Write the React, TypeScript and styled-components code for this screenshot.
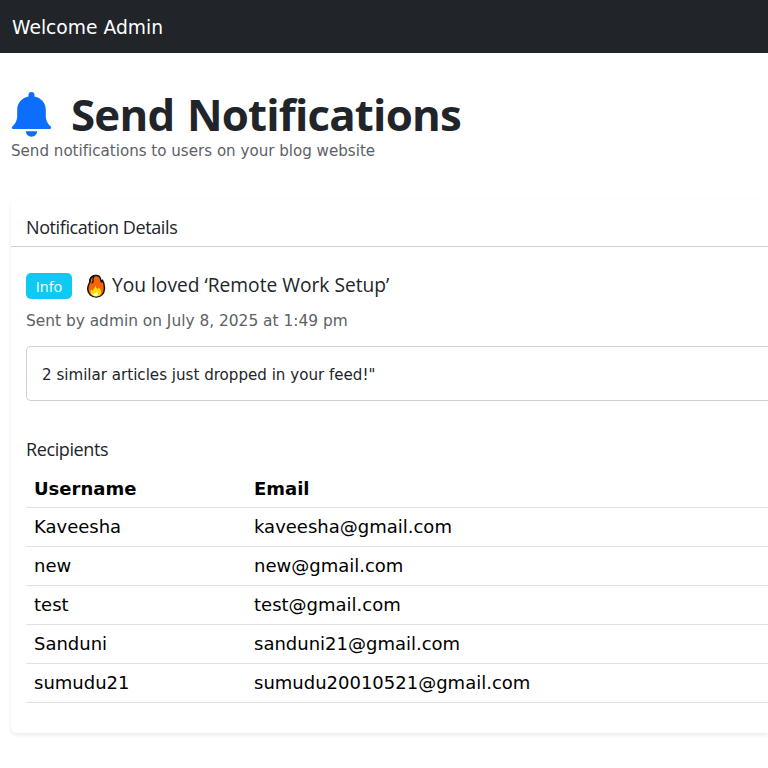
import React from "react";
import styled, { createGlobalStyle } from "styled-components";

const heading = `"Open Sans", "Noto Sans", sans-serif`;
const body = `"DejaVu Sans", "Liberation Sans", sans-serif`;

const GlobalStyle = createGlobalStyle`
  *, *::before, *::after { box-sizing: border-box; }
  html, body { margin: 0; padding: 0; background: #fff; }
  body {
    font-family: ${body};
    font-size: 18px;
    font-variant-ligatures: none;
    color: #212529;
  }
`;

const Navbar = styled.header`
  display: flex;
  align-items: center;
  height: 53px;
  padding: 2px 12px 0;
  background: #212529;
`;

const Brand = styled.span`
  font-size: 18.7px;
  line-height: 28px;
  color: #fff;
`;

const Page = styled.main`
  padding: 39px 0 30px 11px;
`;

const TitleRow = styled.div`
  display: flex;
  align-items: flex-start;
  height: 48px;
`;

const BellIcon = styled.svg`
  width: 41px;
  height: 45px;
  margin-right: 19px;
  fill: #0d6efd;
`;

const Title = styled.h1`
  margin: 0;
  font-family: ${heading};
  font-weight: 700;
  font-size: 43.8px;
  line-height: 44px;
  letter-spacing: -0.8px;
  word-spacing: 2px;
`;

const Subtitle = styled.p`
  margin: 0;
  font-size: 15.1px;
  line-height: 22px;
  color: #5c6166;
`;

const Card = styled.section`
  margin-top: 37px;
  height: 534px;
  background: #fff;
  border-radius: 6px 0 0 6px;
  box-shadow: 0 2px 4px rgba(0, 0, 0, 0.085);
`;

const CardHeader = styled.div`
  height: 48px;
  padding: 16px 15px 0;
  border-bottom: 1px solid #cfd0d1;
`;

const SectionTitle = styled.h2`
  margin: 0;
  font-family: ${heading};
  font-weight: 400;
  font-size: 18px;
  line-height: 24px;
  letter-spacing: -0.4px;
`;

const CardBody = styled.div`
  padding: 26px 0 0 15px;
`;

const NotificationRow = styled.div`
  display: flex;
  align-items: center;
  height: 26px;
`;

const Badge = styled.span`
  width: 46px;
  height: 26px;
  border-radius: 5px;
  background: #0dcaf0;
  color: #fff;
  font-family: ${heading};
  font-size: 14.6px;
  line-height: 27px;
  text-align: center;
`;

const FireIcon = styled.svg`
  width: 20px;
  height: 24px;
  margin: 0 6px 0 14px;
`;

const NotificationTitle = styled.h3`
  margin: 0;
  font-family: ${heading};
  font-weight: 400;
  font-size: 19.2px;
  line-height: 24px;
  padding-bottom: 2px;
`;

const Meta = styled.p`
  margin: 11px 0 13px;
  font-size: 15.4px;
  line-height: 23px;
  color: #5c6166;
`;

const Message = styled.div`
  height: 55px;
  padding: 17px 15px 0;
  margin-bottom: 36px;
  border: 1px solid #cfd0d1;
  border-right: 0;
  border-radius: 5px 0 0 5px;
  font-size: 15.1px;
  line-height: 23px;
`;

const Table = styled.table`
  width: 100%;
  margin-top: 8px;
  border-collapse: separate;
  border-spacing: 0;
  table-layout: fixed;
  color: #000;
`;

const Cell = styled.td<{ $width?: number }>`
  height: 39px;
  padding: 0 8px 2px;
  border-bottom: 1px solid #dee2e6;
  width: ${({ $width }) => ($width ? `${$width}px` : "auto")};
  font-size: 18px;
  line-height: 27px;
  text-align: left;
`;

const HeadCell = styled(Cell)`
  padding-bottom: 0;
  font-weight: 700;
`;

const recipients = [
  ["Kaveesha", "kaveesha@gmail.com"],
  ["new", "new@gmail.com"],
  ["test", "test@gmail.com"],
  ["Sanduni", "sanduni21@gmail.com"],
  ["sumudu21", "sumudu20010521@gmail.com"],
];

export default function App() {
  return (
    <>
      <GlobalStyle />
      <Navbar>
        <Brand>Welcome Admin</Brand>
      </Navbar>
      <Page>
        <TitleRow>
          <BellIcon viewBox="0 0 41 45" aria-hidden="true">
            <path d="M20.500 0a3 3 0 0 0-3 3v1.500C10.300 5.800 6.200 11.500 6.200 18v6.300c0 3.700-1.600 6.900-4.100 9.400l-.8.800C.3 35.500.9 37 2.500 37h36c1.600 0 2.200-1.500 1.200-2.500l-.8-.8c-2.500-2.500-4.100-5.700-4.100-9.400V18c0-6.500-4.100-12.200-11.300-13.500V3a3 3 0 0 0-3-3z" />
            <path d="M14.800 39.300h11.400c0 3-2.500 5.400-5.700 5.400s-5.700-2.400-5.700-5.400z" />
          </BellIcon>
          <Title>Send Notifications</Title>
        </TitleRow>
        <Subtitle>Send notifications to users on your blog website</Subtitle>

        <Card>
          <CardHeader>
            <SectionTitle>Notification Details</SectionTitle>
          </CardHeader>
          <CardBody>
            <NotificationRow>
              <Badge>Info</Badge>
              <FireIcon viewBox="0 0 20 24" aria-hidden="true">
                <path
                  d="M8.600 1.600C11.500 1 14 2.400 14.600 5.200c.2 1 .3 1.900.9 2.700.5-.6.600-1.200.9-1.700 1.600 2.600 2.300 5.600 2 9-.3 4.600-3.500 7.800-8.100 7.800-4.900 0-8.600-3.300-8.600-8.200 0-3.300 1.500-5.200 2.400-7.300C3.300 4.600 5.500 2 8.600 1.600z"
                  fill="#f7630c"
                  stroke="#111"
                  strokeWidth="1.500"
                  strokeLinejoin="round"
                />
                <path d="M4 8.500C3.300 5 5.500 2.700 8.300 2.100c-1.300 1.300-1.800 2.600-1.200 4.200.4 1.200-.6 2.700-1.600 2.600" fill="none" stroke="#111" strokeWidth="1.300" />
                <path d="M9.700 11.500c.1 1.800.9 2.900 1.800 3.700.7-.5 1-.9 1.300-1.700 1.700 1.700 2.700 3.300 2.400 5.200-.5 2.300-2.600 3.700-5 3.700-3.200 0-5.600-1.800-5.700-4.500 0-1 .2-1.900.7-2.600.4.600.8.9 1.500 1 1.600-1.200 1.900-3.100 3-4.800z" fill="#ffde00" />
                <path d="M10.200 18c.4 1 1.100 1.200 1.900 1.200.6 1.600-.4 2.900-2.300 2.900-1.700 0-2.700-1-2.400-2.400 1.200.2 2.200-.5 2.800-1.700z" fill="#fffbe6" />
              </FireIcon>
              <NotificationTitle>You loved ‘Remote Work Setup’</NotificationTitle>
            </NotificationRow>
            <Meta>Sent by admin on July 8, 2025 at 1:49 pm</Meta>
            <Message>2 similar articles just dropped in your feed!"</Message>
            <SectionTitle>Recipients</SectionTitle>
            <Table>
              <thead>
                <tr>
                  <HeadCell as="th" $width={220}>Username</HeadCell>
                  <HeadCell as="th">Email</HeadCell>
                </tr>
              </thead>
              <tbody>
                {recipients.map(([name, email]) => (
                  <tr key={name}>
                    <Cell>{name}</Cell>
                    <Cell>{email}</Cell>
                  </tr>
                ))}
              </tbody>
            </Table>
          </CardBody>
        </Card>
      </Page>
    </>
  );
}
